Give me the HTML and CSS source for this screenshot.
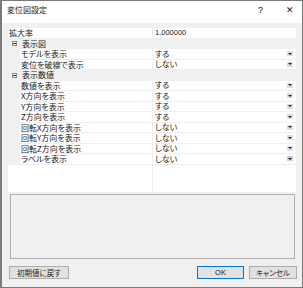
FILE: index.html
```html
<!DOCTYPE html>
<html>
<head>
    <meta charset="utf-8">
    <link rel="stylesheet" href="styles.css">
</head>
<body>
    <div class="dialog">
        <div class="titlebar">
            <span class="title">変位図設定</span>
            <span class="help">?</span>
            <span class="close">✕</span>
        </div>

        <div class="content">
            <div class="grid">
                <div class="row top">
                    <div class="name">拡大率</div>
                    <div class="value">1.000000</div>
                </div>

                <div class="row cat"><span class="toggle"></span>表示図</div>
                <div class="row item">
                    <div class="gutter"></div>
                    <div class="name">モデルを表示</div>
                    <div class="value">する<span class="drop"></span></div>
                </div>
                <div class="row item">
                    <div class="gutter"></div>
                    <div class="name">変位を破線で表示</div>
                    <div class="value">しない<span class="drop"></span></div>
                </div>

                <div class="row cat"><span class="toggle"></span>表示数値</div>
                <div class="row item">
                    <div class="gutter"></div>
                    <div class="name">数値を表示</div>
                    <div class="value">する<span class="drop"></span></div>
                </div>
                <div class="row item">
                    <div class="gutter"></div>
                    <div class="name">X方向を表示</div>
                    <div class="value">する<span class="drop"></span></div>
                </div>
                <div class="row item">
                    <div class="gutter"></div>
                    <div class="name">Y方向を表示</div>
                    <div class="value">する<span class="drop"></span></div>
                </div>
                <div class="row item">
                    <div class="gutter"></div>
                    <div class="name">Z方向を表示</div>
                    <div class="value">する<span class="drop"></span></div>
                </div>
                <div class="row item">
                    <div class="gutter"></div>
                    <div class="name">回転X方向を表示</div>
                    <div class="value">しない<span class="drop"></span></div>
                </div>
                <div class="row item">
                    <div class="gutter"></div>
                    <div class="name">回転Y方向を表示</div>
                    <div class="value">しない<span class="drop"></span></div>
                </div>
                <div class="row item">
                    <div class="gutter"></div>
                    <div class="name">回転Z方向を表示</div>
                    <div class="value">しない<span class="drop"></span></div>
                </div>
                <div class="row item">
                    <div class="gutter"></div>
                    <div class="name">ラベルを表示</div>
                    <div class="value">しない<span class="drop active"></span></div>
                </div>

                <div class="filler">
                    <div class="blank"></div>
                    <div class="blank-value"></div>
                </div>
            </div>

            <div class="desc"></div>

            <div class="buttons">
                <button class="btn reset">初期値に戻す</button>
                <div class="spacer"></div>
                <button class="btn ok">OK</button>
                <button class="btn cancel">キャンセル</button>
            </div>
        </div>
    </div>
</body>
</html>
```

FILE: styles.css
```css
html, body {
    margin: 0;
    padding: 0;
}

body {
    font-family: "Noto Sans CJK JP", "Noto Sans", sans-serif;
    font-feature-settings: "palt";
    color: #1a1a1a;
    background-color: #ffffff;
}

.dialog {
    width: 303px;
    height: 288px;
    box-sizing: border-box;
    border: 1px solid #7a7a7a;
    border-left-width: 2px;
    background-color: #f0f0f0;
    display: flex;
    flex-direction: column;
}

.titlebar {
    height: 22px;
    background-color: #ffffff;
    display: flex;
    align-items: flex-start;
    padding: 3px 0 0 5px;
    box-sizing: border-box;
    font-size: 8px;
    line-height: 12px;
}

.title {
    flex: 1;
}

.help {
    width: 28px;
    font-family: "Liberation Sans", sans-serif;
    font-size: 9px;
}

.close {
    width: 16px;
    font-size: 9px;
}

.content {
    flex: 1;
    display: flex;
    flex-direction: column;
    padding: 5px 5px 0 6px;
}

/* property grid */
.grid {
    width: 288px;
    height: 164px;
    background-color: #ffffff;
    display: flex;
    flex-direction: column;
    font-size: 8px;
}

.row {
    height: 10.5px;
    line-height: 10px;
    display: flex;
    flex-shrink: 0;
}

.row .name,
.row .value {
    box-sizing: border-box;
    height: 10.5px;
    border-bottom: 1px solid #eeeeee;
    white-space: nowrap;
}

.row .value {
    flex: 1;
    border-left: 1px solid #eeeeee;
    padding: 0 3px 0 2px;
    display: flex;
    align-items: center;
    justify-content: space-between;
}

.top .name {
    width: 144px;
    padding-left: 1px;
}

.top .value {
    font-family: "Liberation Sans", sans-serif;
    font-size: 7.5px;
}

.cat {
    background-color: #f0f0f0;
    align-items: center;
    line-height: 10px;
}

.toggle {
    width: 5px;
    height: 5px;
    box-sizing: border-box;
    border: 1px solid #8a8a8a;
    margin: 0 5px 0 4px;
    position: relative;
    background-color: #ffffff;
}

.toggle::after {
    content: "";
    position: absolute;
    left: 0;
    top: 1px;
    width: 3px;
    height: 1px;
    background-color: #333;
}

.gutter {
    width: 12px;
    background-color: #f0f0f0;
}

.item .name {
    width: 132px;
    padding-left: 1px;
}

.drop {
    width: 6px;
    height: 5px;
    background-color: #dcdee6;
    display: flex;
    align-items: center;
    justify-content: center;
}

.drop::after {
    content: "";
    border-top: 2px solid #222;
    border-left: 2px solid transparent;
    border-right: 2px solid transparent;
}

.drop.active {
    background-color: #c9ccdb;
}

.filler {
    flex: 1;
    display: flex;
}

.blank {
    width: 144px;
}

.blank-value {
    flex: 1;
    border-left: 1px solid #eeeeee;
}

/* description box */
.desc {
    height: 65px;
    margin: 2px 2px 0 2px;
    box-sizing: border-box;
    border: 1px solid #b0b0b0;
    background-color: #f0f0f0;
}

.buttons {
    display: flex;
    gap: 5px;
    margin-top: 7px;
    padding-left: 1px;
}

.spacer {
    flex: 1;
}

.btn {
    height: 13px;
    padding: 0;
    margin: 0;
    box-sizing: border-box;
    border: 1px solid #adadad;
    background-color: #e1e1e1;
    font-family: "Noto Sans CJK JP", "Noto Sans", sans-serif;
    font-feature-settings: "palt";
    font-size: 7.5px;
    line-height: 11px;
    color: #1a1a1a;
}

.reset {
    width: 60px;
}

.ok {
    width: 47px;
    border-color: #0078d7;
    font-family: "Liberation Sans", sans-serif;
}

.cancel {
    width: 48px;
}
```
